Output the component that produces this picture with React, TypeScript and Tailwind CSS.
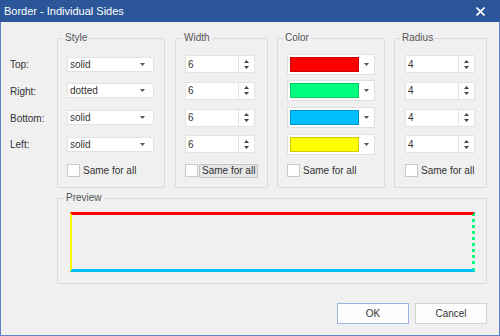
import React from 'react';

const sides = ['Top:', 'Right:', 'Bottom:', 'Left:'];
const styles = ['solid', 'dotted', 'solid', 'solid'];
const colors = ['#ff0000', '#00ff7f', '#00bfff', '#ffff00'];

const Arrow: React.FC = () => (
  <svg width="5" height="3" viewBox="0 0 5 3" className="shrink-0">
    <path d="M0 0 L5 0 L2.5 3 Z" fill="#555" />
  </svg>
);

const Spin: React.FC<{ value: string }> = ({ value }) => (
  <div className="flex h-[18px] w-[70px] bg-white border border-[#e3e3e3]">
    <div className="flex-1 pl-[2px] flex items-center">{value}</div>
    <div className="w-[16px] border-l border-[#e3e3e3] flex flex-col items-center justify-center gap-[3px]">
      <svg width="5" height="3" viewBox="0 0 5 3">
        <path d="M0 3 L5 3 L2.5 0 Z" fill="#444" />
      </svg>
      <svg width="5" height="3" viewBox="0 0 5 3">
        <path d="M0 0 L5 0 L2.5 3 Z" fill="#444" />
      </svg>
    </div>
  </div>
);

const Check: React.FC<{ boxed?: boolean }> = ({ boxed }) => (
  <div className="flex items-center h-[26.67px]">
    <div className="w-[13px] h-[13px] bg-white border border-[#c9c9c9]" />
    {boxed ? (
      <span className="ml-[1px] h-[14px] px-[2px] flex items-center bg-[#e6e6e6] border border-[#c4c4c4]">Same for all</span>
    ) : (
      <span className="ml-[3px]">Same for all</span>
    )}
  </div>
);

const Group: React.FC<{ title: string; cls: string; lg: string; children: React.ReactNode }> = ({ title, cls, lg, children }) => (
  <fieldset className={`${cls} h-[157px] border border-[#dadada] rounded-[2px] pt-[6px]`}>
    <legend className={`${lg} px-[2px] leading-[14px] text-[#555]`}>{title}</legend>
    {children}
  </fieldset>
);

const App: React.FC = () => {
  return (
    <div className="w-[500px] h-[336px] flex flex-col bg-[#f0f0f0] text-[10px] text-[#333] font-['Liberation_Sans',Arial,sans-serif]">
      {/* title bar */}
      <div className="h-[22px] shrink-0 bg-[#2b579a] flex items-center justify-between pl-[4px] pr-[15px] text-white text-[11px]">
        <span>Border - Individual Sides</span>
        <svg width="9" height="9" viewBox="0 0 9 9">
          <path d="M0.5 0.5 L8.5 8.5 M8.5 0.5 L0.5 8.5" stroke="#fff" strokeWidth="1.6" />
        </svg>
      </div>

      <div className="flex-1 flex flex-col border-x border-b border-[#5d84c6]">
        <div className="flex items-start mt-[9px]">
          {/* labels */}
          <div className="w-[56px] pl-[9px] pt-[20.67px] flex flex-col">
            {sides.map((s) => (
              <div key={s} className="h-[26.67px] flex items-center">{s}</div>
            ))}
          </div>

          <Group title="Style" cls="w-[108px] pl-[9px]" lg="ml-[-4px]">
            {styles.map((s, i) => (
              <div key={i} className="h-[26.67px] flex items-center">
                <div className="w-[87px] h-[15px] bg-white border border-[#e3e3e3] flex items-center justify-between pl-[2px] pr-[8px]">
                  <span>{s}</span>
                  <Arrow />
                </div>
              </div>
            ))}
            <Check />
          </Group>

          <div className="ml-[10px]">
            <Group title="Width" cls="w-[93px] pl-[9px]" lg="ml-[-3px]">
              {[0, 1, 2, 3].map((i) => (
                <div key={i} className="h-[26.67px] flex items-center">
                  <Spin value="6" />
                </div>
              ))}
              <Check boxed />
            </Group>
          </div>

          <div className="ml-[9px]">
            <Group title="Color" cls="w-[108px] pl-[9px]" lg="ml-[-4px]">
              {colors.map((c) => (
                <div key={c} className="h-[26.67px] flex items-center">
                  <div className="w-[88px] h-[21px] bg-white border border-[#e0e0e0] flex items-center pl-[2px] pr-[5px] gap-[5px]">
                    <div className="w-[70px] h-[15px] border border-black/20" style={{ backgroundColor: c }} />
                    <Arrow />
                  </div>
                </div>
              ))}
              <Check />
            </Group>
          </div>

          <div className="ml-[9px]">
            <Group title="Radius" cls="w-[93px] pl-[10px]" lg="ml-[-5px]">
              {[0, 1, 2, 3].map((i) => (
                <div key={i} className="h-[26.67px] flex items-center">
                  <Spin value="4" />
                </div>
              ))}
              <Check />
            </Group>
          </div>
        </div>

        {/* preview */}
        <fieldset className="ml-[56px] mt-[3px] w-[430px] h-[93px] border border-[#dadada] rounded-[2px] pl-[12px] pt-[7px]">
          <legend className="ml-[-6px] px-[2px] leading-[14px] text-[#555]">Preview</legend>
          <div className="w-[405px] h-[60px] border-t-[3px] border-t-[#ff0000] border-r-[3px] border-r-[#00ff7f] [border-right-style:dotted] border-b-[3px] border-b-[#00bfff] border-l-[2px] border-l-[#ffff00]" />
        </fieldset>

        {/* buttons */}
        <div className="flex justify-end gap-[6px] mt-[19px] pr-[12px]">
          <button className="w-[72px] h-[21px] bg-[#fdfdfd] border border-[#9fb3e0] text-[#333]">OK</button>
          <button className="w-[72px] h-[21px] bg-[#fdfdfd] border border-[#d2d2d2] text-[#333]">Cancel</button>
        </div>
      </div>
    </div>
  );
};

export default App;
